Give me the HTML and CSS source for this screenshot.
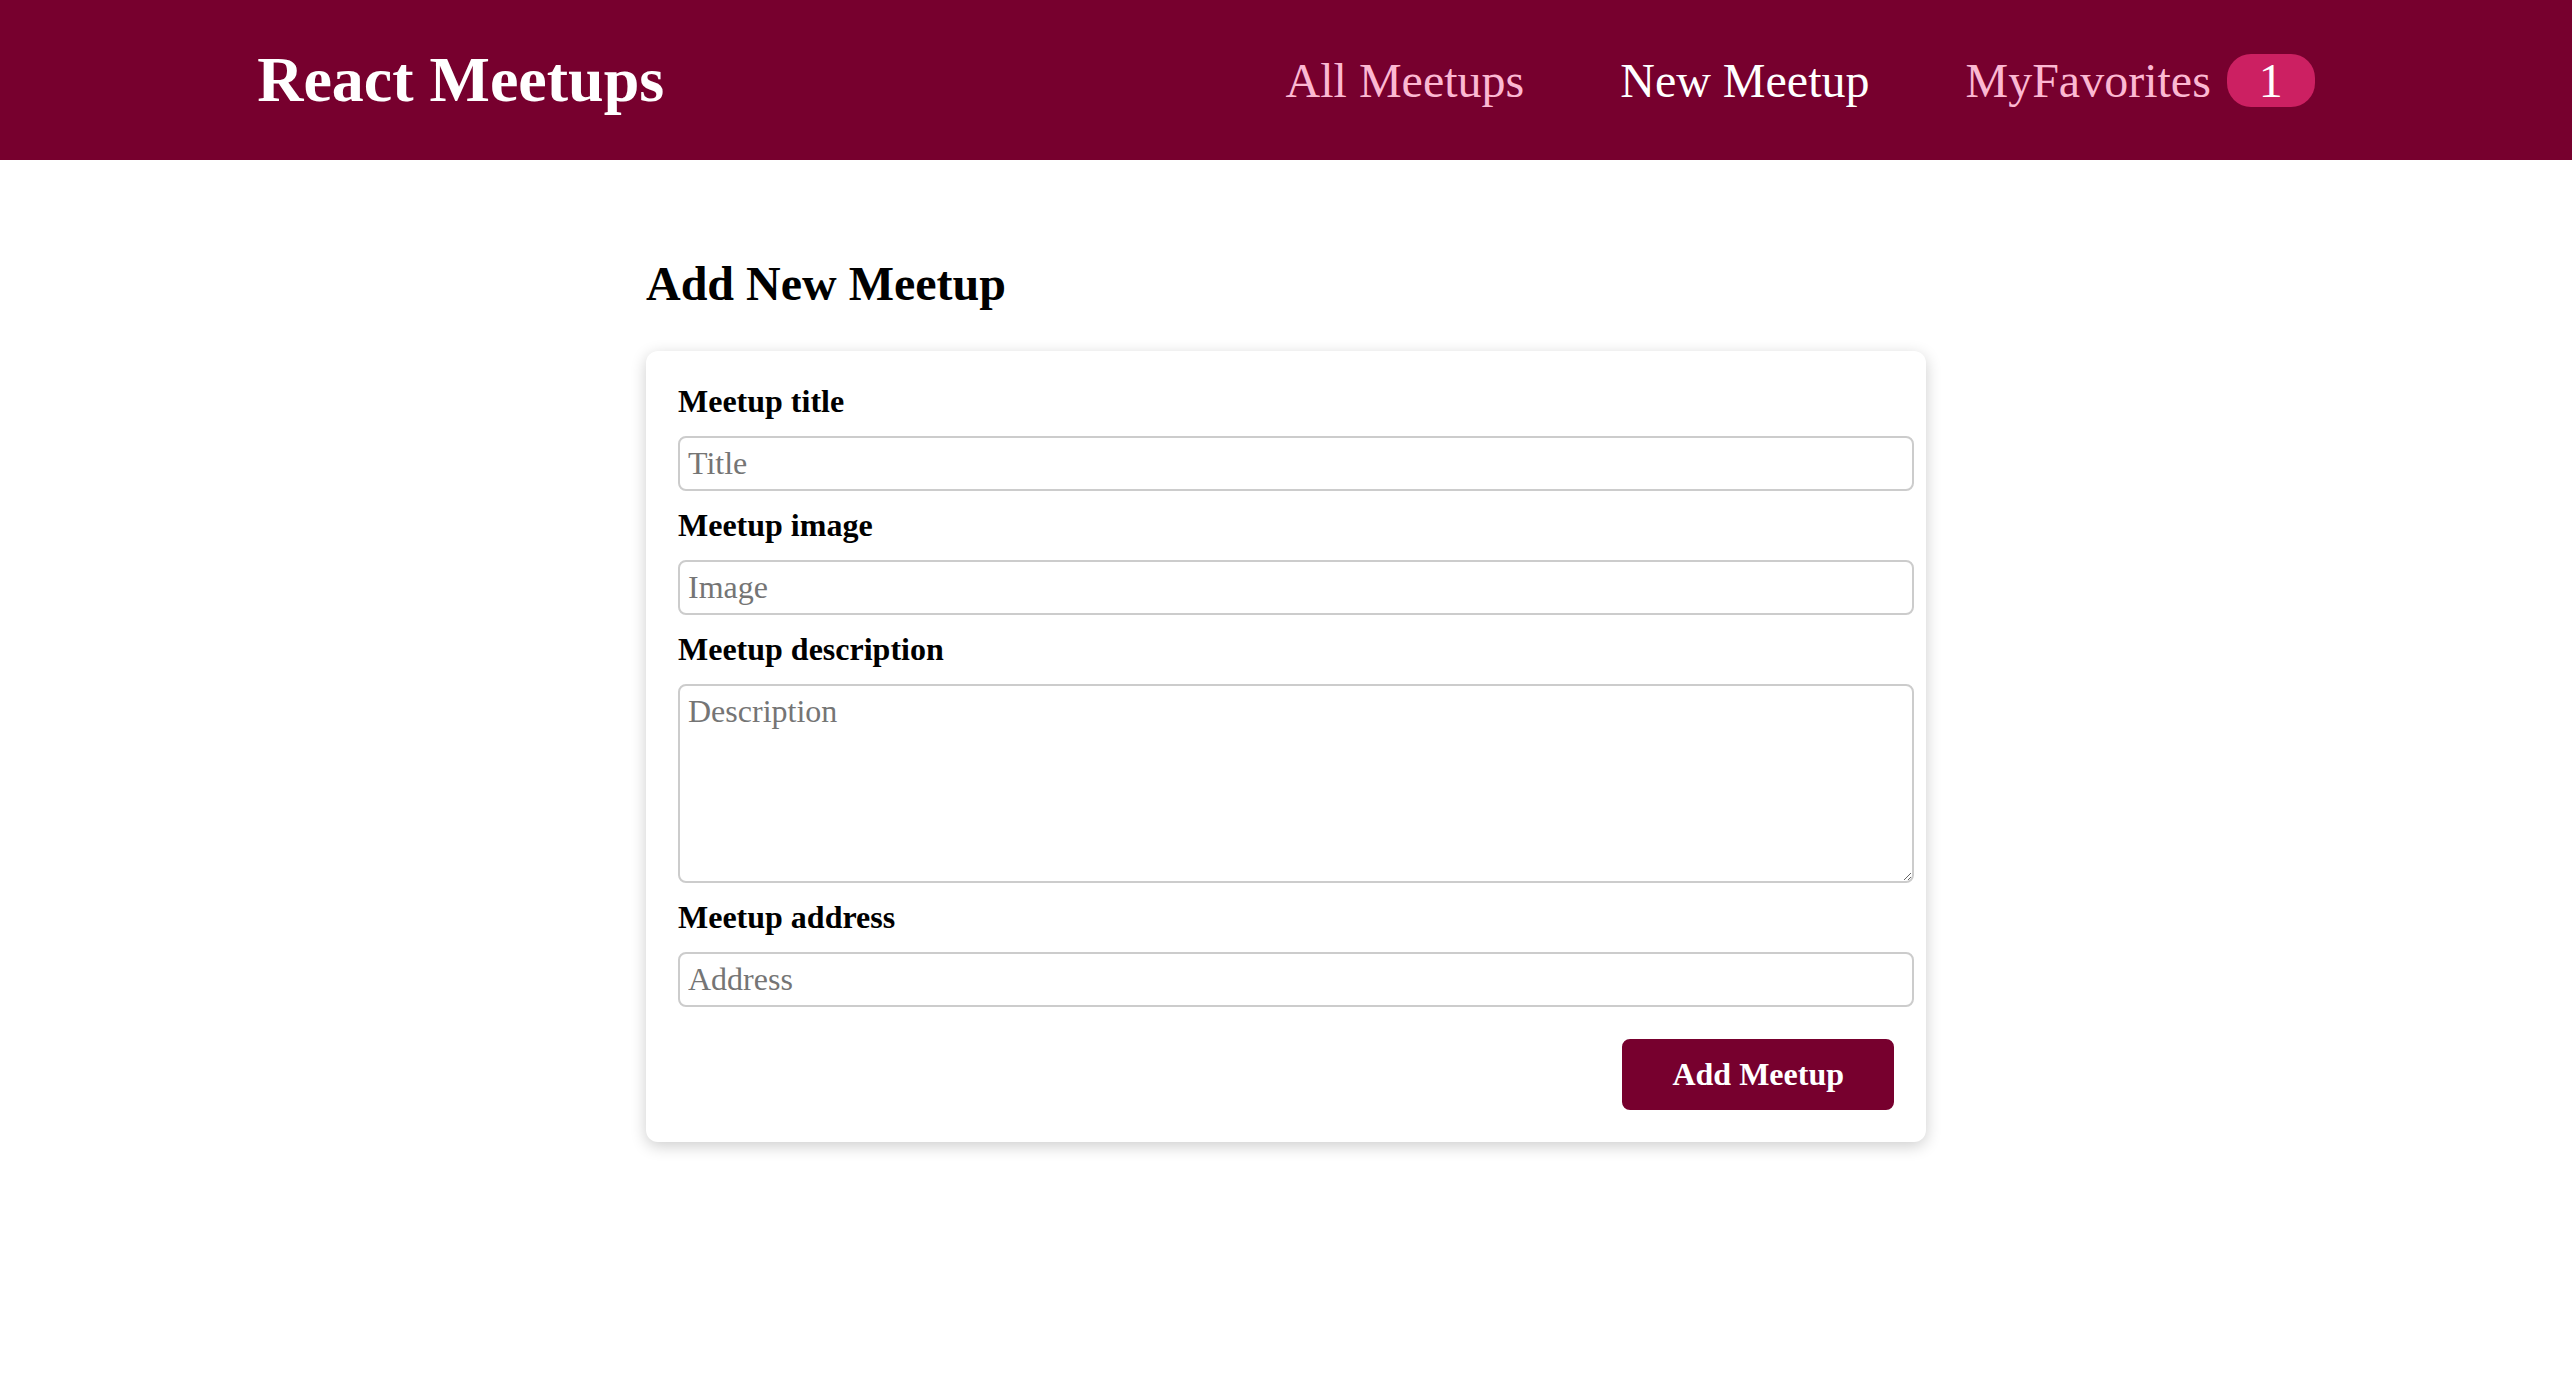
FILE: index.html
```html
<!DOCTYPE html>
<html lang="en">
<head>
<meta charset="utf-8">
<title>React Meetups</title>
<link rel="stylesheet" href="styles.css">
</head>
<body>
<header class="header">
  <div class="logo">React Meetups</div>
  <nav>
    <ul class="nav-list">
      <li class="nav-item"><a class="nav-link" href="#">All Meetups</a></li>
      <li class="nav-item"><a class="nav-link active" href="#">New Meetup</a></li>
      <li class="nav-item"><a class="nav-link" href="#">MyFavorites<span class="badge">1</span></a></li>
    </ul>
  </nav>
</header>
<main class="main">
  <section>
    <h1 class="page-title">Add New Meetup</h1>
    <div class="card">
      <form class="form">
        <div class="control">
          <label for="title">Meetup title</label>
          <input type="text" id="title" placeholder="Title">
        </div>
        <div class="control">
          <label for="image">Meetup image</label>
          <input type="url" id="image" placeholder="Image">
        </div>
        <div class="control">
          <label for="description">Meetup description</label>
          <textarea id="description" rows="5" placeholder="Description"></textarea>
        </div>
        <div class="control">
          <label for="address">Meetup address</label>
          <input type="text" id="address" placeholder="Address">
        </div>
        <div class="actions">
          <button type="button">Add Meetup</button>
        </div>
      </form>
    </div>
  </section>
</main>
</body>
</html>
```
FILE: styles.css
```css
html {
  font-size: 32px;
}

body {
  margin: 0;
  font-family: "Liberation Serif", "Times New Roman", serif;
  font-size: 32px;
  color: #000;
  background: #fff;
}

.header {
  box-sizing: border-box;
  width: 100%;
  height: 5rem;
  display: flex;
  align-items: center;
  justify-content: space-between;
  background-color: #77002e;
  padding: 0 10%;
}

.logo {
  font-size: 2rem;
  color: #fff;
  font-weight: bold;
}

.nav-list {
  list-style: none;
  margin: 0;
  padding: 0;
  display: flex;
  align-items: baseline;
}

.nav-item {
  margin-left: 3rem;
}

.nav-link {
  text-decoration: none;
  font-size: 1.5rem;
  color: #fcb8d2;
}

.nav-link.active {
  color: #fff;
}

.badge {
  background-color: #cc2062;
  color: #fff;
  border-radius: 24px;
  padding: 0 1rem;
  margin-left: 0.5rem;
}

.main {
  margin: 3rem auto;
  width: 90%;
  max-width: 40rem;
}

.page-title {
  font-size: 1.5rem;
  font-weight: bold;
  margin: 0.83em 0;
}

.card {
  background-color: #fff;
  border-radius: 12px;
  box-shadow: 0 4px 16px rgba(0, 0, 0, 0.2);
}

.form {
  padding: 1rem;
}

.control {
  margin-bottom: 0.5rem;
}

.control label {
  display: block;
  font-weight: bold;
  margin-bottom: 0.5rem;
}

.control input,
.control textarea {
  display: block;
  font: inherit;
  line-height: 35px;
  border-radius: 8px;
  border: 2px solid #ccc;
  padding: 0.25rem;
  width: 100%;
  margin: 0;
}

.control textarea {
  height: 179px;
}

.control input::placeholder,
.control textarea::placeholder {
  color: #757575;
}

.actions {
  margin-top: 1rem;
  text-align: right;
}

.actions button {
  font: inherit;
  line-height: 35px;
  cursor: pointer;
  background-color: #77002e;
  color: #fff;
  padding: 0.5rem 1.5rem;
  border: 2px solid #77002e;
  border-radius: 8px;
  font-weight: bold;
}
```
